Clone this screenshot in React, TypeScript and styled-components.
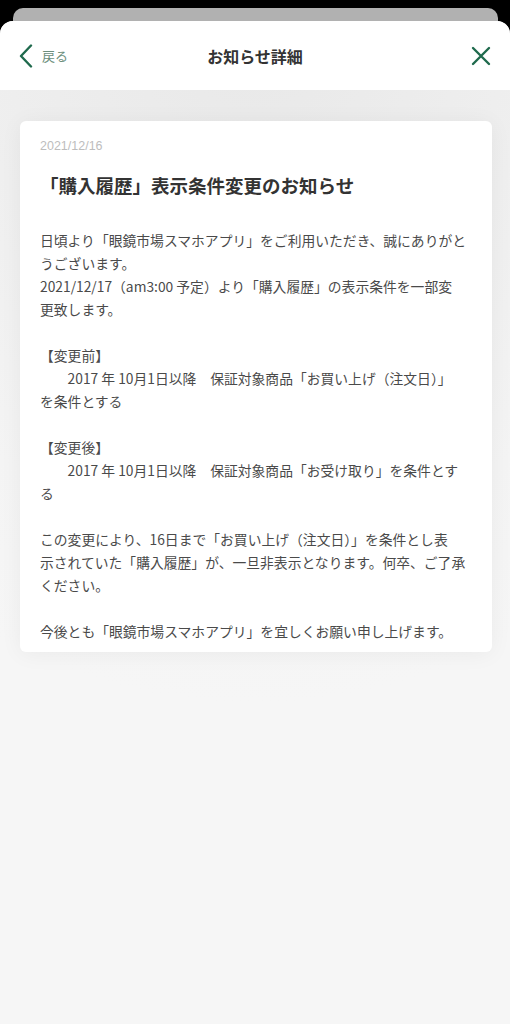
import styled, { createGlobalStyle } from "styled-components";

const GlobalStyle = createGlobalStyle`
  html, body {
    margin: 0;
    padding: 0;
    background: #000;
  }
  * {
    box-sizing: border-box;
  }
`;

const Screen = styled.div`
  width: 510px;
  height: 1024px;
  display: flex;
  flex-direction: column;
  overflow: hidden;
  font-family: "Noto Sans CJK JP", "Noto Sans", sans-serif;
`;

const BackSheet = styled.div`
  height: 25px;
  margin: 8px 12px 0 13px;
  background: #b1b1b1;
  border-radius: 10px 10px 0 0;
  flex-shrink: 0;
`;

const Sheet = styled.div`
  flex: 1;
  margin-top: -12px;
  display: flex;
  flex-direction: column;
  border-radius: 13px 13px 0 0;
  overflow: hidden;
  background: radial-gradient(
    ellipse 140% 80% at 50% 0%,
    #e8e8e8 0%,
    #eeeeee 35%,
    #f4f4f4 65%,
    #f6f6f6 85%
  );
`;

const Header = styled.header`
  height: 69px;
  flex-shrink: 0;
  background: #fff;
  display: grid;
  grid-template-columns: 1fr auto 1fr;
  align-items: center;
  padding: 0 19px 0 19px;
`;

const BackButton = styled.button`
  display: flex;
  align-items: center;
  gap: 9px;
  border: none;
  background: transparent;
  padding: 0;
  cursor: pointer;
  justify-self: start;
`;

const BackLabel = styled.span`
  font-size: 13px;
  color: #6b8e7c;
  font-family: "Noto Sans CJK JP", sans-serif;
`;

const Title = styled.h1`
  margin: 0;
  font-size: 16px;
  font-weight: 700;
  color: #333;
`;

const CloseButton = styled.button`
  justify-self: end;
  border: none;
  background: transparent;
  padding: 0;
  display: flex;
  cursor: pointer;
`;

const Content = styled.main`
  padding: 31px 18px 0 20px;
`;

const Card = styled.article`
  background: #fff;
  border-radius: 6px;
  padding: 16px 20px 9px;
  box-shadow: 0 2px 22px rgba(0, 0, 0, 0.05);
`;

const DateText = styled.div`
  font-size: 12.5px;
  line-height: 18px;
  color: #bdbdbd;
  font-family: "Liberation Sans", "Noto Sans CJK JP", sans-serif;
`;

const NoticeTitle = styled.h2`
  margin: 17px 0 0;
  font-size: 18.5px;
  line-height: 26px;
  font-weight: 700;
  color: #333;
`;

const Body = styled.div`
  margin-top: 31px;
  font-size: 13.8px;
  line-height: 23px;
  color: #4a4a4a;
  white-space: pre;
`;

const ChevronLeft = () => (
  <svg width="14" height="24" viewBox="0 0 14 24" fill="none">
    <polyline
      points="12,1.5 2,12 12,22.5"
      stroke="#1f6a4d"
      strokeWidth="2.4"
      strokeLinecap="round"
      strokeLinejoin="round"
    />
  </svg>
);

const CloseIcon = () => (
  <svg width="20" height="20" viewBox="0 0 20 20" fill="none">
    <path
      d="M2 2 L18 18 M18 2 L2 18"
      stroke="#1f6a4d"
      strokeWidth="2.4"
      strokeLinecap="round"
    />
  </svg>
);

// line breaks follow the app's own wrapping
const body = `日頃より「眼鏡市場スマホアプリ」をご利用いただき、誠にありがと
うございます。
2021/12/17（am3:00 予定）より「購入履歴」の表示条件を一部変
更致します。

【変更前】
　　2017 年 10月1日以降　保証対象商品「お買い上げ（注文日）」
を条件とする

【変更後】
　　2017 年 10月1日以降　保証対象商品「お受け取り」を条件とす
る

この変更により、16日まで「お買い上げ（注文日）」を条件とし表
示されていた「購入履歴」が、一旦非表示となります。何卒、ご了承
ください。

今後とも「眼鏡市場スマホアプリ」を宜しくお願い申し上げます。`;

export default function App() {
  return (
    <>
      <GlobalStyle />
      <Screen>
        <BackSheet />
        <Sheet>
          <Header>
            <BackButton>
              <ChevronLeft />
              <BackLabel>戻る</BackLabel>
            </BackButton>
            <Title>お知らせ詳細</Title>
            <CloseButton>
              <CloseIcon />
            </CloseButton>
          </Header>
          <Content>
            <Card>
              <DateText>2021/12/16</DateText>
              <NoticeTitle>「購入履歴」表示条件変更のお知らせ</NoticeTitle>
              <Body>{body}</Body>
            </Card>
          </Content>
        </Sheet>
      </Screen>
    </>
  );
}
